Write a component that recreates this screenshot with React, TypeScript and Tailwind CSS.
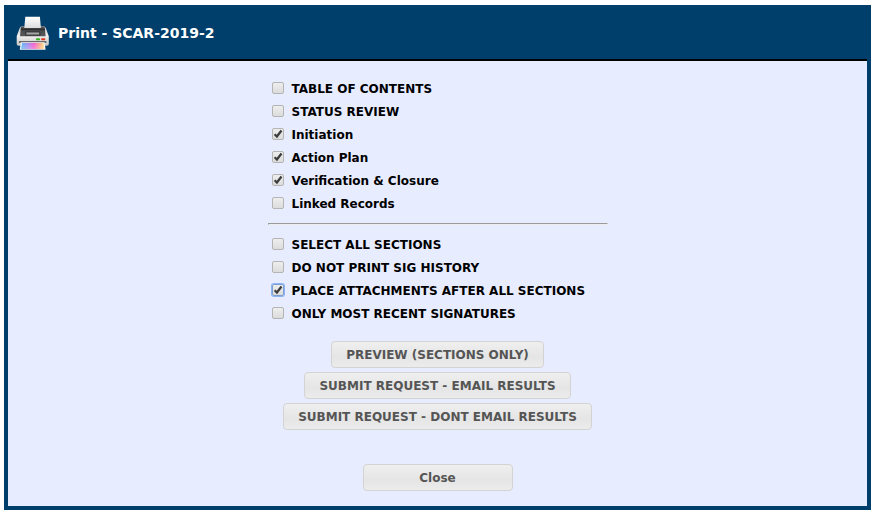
import { useState } from 'react'
import type { ReactNode } from 'react'

type Option = {
  id: string
  label: string
  checked?: boolean
  highlighted?: boolean
}

const SECTIONS: Option[] = [
  { id: 'toc', label: 'TABLE OF CONTENTS' },
  { id: 'status', label: 'STATUS REVIEW' },
  { id: 'initiation', label: 'Initiation', checked: true },
  { id: 'action', label: 'Action Plan', checked: true },
  { id: 'closure', label: 'Verification & Closure', checked: true },
  { id: 'linked', label: 'Linked Records' },
]

const SETTINGS: Option[] = [
  { id: 'all', label: 'SELECT ALL SECTIONS' },
  { id: 'nosig', label: 'DO NOT PRINT SIG HISTORY' },
  { id: 'attach', label: 'PLACE ATTACHMENTS AFTER ALL SECTIONS', checked: true, highlighted: true },
  { id: 'recent', label: 'ONLY MOST RECENT SIGNATURES' },
]

function PrinterIcon() {
  return (
    <svg viewBox="0 0 34 34" className="size-[34px] shrink-0" aria-hidden="true">
      <defs>
        <linearGradient id="paper" x1="0" y1="0" x2="0" y2="1">
          <stop offset="0" stopColor="#ffffff" />
          <stop offset="1" stopColor="#dcdddf" />
        </linearGradient>
        <linearGradient id="body" x1="0" y1="0" x2="0" y2="1">
          <stop offset="0" stopColor="#c4c5c6" />
          <stop offset="0.5" stopColor="#f0f0ef" />
          <stop offset="1" stopColor="#c4c4c2" />
        </linearGradient>
        <linearGradient id="lid" x1="0" y1="0" x2="0" y2="1">
          <stop offset="0" stopColor="#6a6b6d" />
          <stop offset="0.35" stopColor="#2c2c2d" />
          <stop offset="0.45" stopColor="#4b4c4e" />
          <stop offset="1" stopColor="#58595b" />
        </linearGradient>
        <linearGradient id="ink" x1="0" y1="0" x2="1" y2="0">
          <stop offset="0" stopColor="#58b8f5" />
          <stop offset="0.3" stopColor="#a88cf0" />
          <stop offset="0.55" stopColor="#f45fd0" />
          <stop offset="0.8" stopColor="#fba48c" />
          <stop offset="1" stopColor="#fbe27a" />
        </linearGradient>
        <linearGradient id="fade" x1="0" y1="0" x2="0" y2="1">
          <stop offset="0" stopColor="#ffffff" stopOpacity="0" />
          <stop offset="1" stopColor="#ffffff" stopOpacity="0.25" />
        </linearGradient>
      </defs>
      <path d="M6.4 10.2h20.8q2 0 2.7 2l2.9 8v7.8q0 1.8-1.8 1.8H2.5Q0.7 29.8 0.7 28v-7.8l2.9-8q0.7-2 2.8-2z" fill="url(#body)" />
      <path d="M6.4 10.2h20.8q1.3 0 1.6 1.3l0.8 8.7H4l0.8-8.7q0.3-1.3 1.6-1.3z" fill="url(#lid)" />
      <path d="M9.3 0.7h14.6l1 11.2H8.3z" fill="url(#paper)" />
      <rect x="9.3" y="15.5" width="15" height="4" rx="0.6" fill="#2b2b2c" />
      <rect x="10.3" y="16.4" width="13" height="2.2" fill="#a3a4a5" />
      <rect x="20" y="22.3" width="4" height="1.9" rx="0.4" fill="#35b51f" />
      <rect x="25.2" y="22.3" width="4" height="1.9" rx="0.4" fill="#de3820" />
      <rect x="2.8" y="25.1" width="27.8" height="2" rx="0.8" fill="#6b6a68" />
      <path d="M4.8 26.3h23.8l1 7.5H3.8z" fill="#f6f4fa" />
      <path d="M6 27h21.4l0.8 6H5.2z" fill="url(#ink)" />
      <path d="M6 27h21.4l0.8 6H5.2z" fill="url(#fade)" />
    </svg>
  )
}

function CheckRow({ option }: { option: Option }) {
  const [checked, setChecked] = useState(!!option.checked)
  const ring = option.highlighted ? 'border-[#7f9fd0] ring-1 ring-[#8db4f5]' : 'border-[#b4b4b4]'

  return (
    <div className="flex h-[23px] items-center gap-2 px-1">
      <span className="relative mb-px size-3 shrink-0">
        <input
          id={option.id}
          type="checkbox"
          checked={checked}
          onChange={(e) => setChecked(e.target.checked)}
          className={`block size-3 appearance-none rounded-xs border bg-linear-to-b from-[#eeeeee] to-[#dcdcdc] ${ring}`}
        />
        {checked && (
          <svg viewBox="0 0 12 12" className="pointer-events-none absolute inset-0 size-3" aria-hidden="true">
            <path d="M2.6 6.3l2.3 2.2 4.6-6" fill="none" stroke="#3c3c3c" strokeWidth="2.2" />
          </svg>
        )}
      </span>
      <label htmlFor={option.id} className="whitespace-nowrap">
        {option.label}
      </label>
    </div>
  )
}

function Button({ children, className = 'px-3.5' }: { children: ReactNode; className?: string }) {
  return (
    <button
      type="button"
      className={`h-[27px] rounded-sm border border-[#d3d3d3] bg-linear-to-b from-[#efefef] from-0% via-[#e5e5e5] via-60% to-[#ececec] font-bold whitespace-nowrap text-[#555555] ${className}`}
    >
      {children}
    </button>
  )
}

export default function App() {
  return (
    <div className="min-h-screen bg-white pt-[5px] pr-[3px] pb-1 pl-1 font-['DejaVu_Sans',Verdana,sans-serif] text-[12px] font-bold text-black">
      <div className="border-4 border-[#003f6b] bg-[#e8ecff]">
        <header className="flex items-center gap-2 border-b-2 border-black bg-[#003f6b] px-2 pt-[7px] pb-[9px]">
          <PrinterIcon />
          <h1 className="text-[14px] text-white">Print - SCAR-2019-2</h1>
        </header>

        <main className="flex flex-col items-center pt-4 pb-[15px]">
          <div className="w-[340px]">
            {SECTIONS.map((o) => (
              <CheckRow key={o.id} option={o} />
            ))}
            <hr className="my-2 h-[2px] border border-t-[#9a9a9a] border-r-[#eeeeee] border-b-[#eeeeee] border-l-[#9a9a9a]" />
            {SETTINGS.map((o) => (
              <CheckRow key={o.id} option={o} />
            ))}
          </div>

          <div className="mt-4 flex flex-col items-center gap-1">
            <Button>PREVIEW (SECTIONS ONLY)</Button>
            <Button>SUBMIT REQUEST - EMAIL RESULTS</Button>
            <Button>SUBMIT REQUEST - DONT EMAIL RESULTS</Button>
          </div>

          <Button className="mt-[34px] w-[150px]">Close</Button>
        </main>
      </div>
    </div>
  )
}
